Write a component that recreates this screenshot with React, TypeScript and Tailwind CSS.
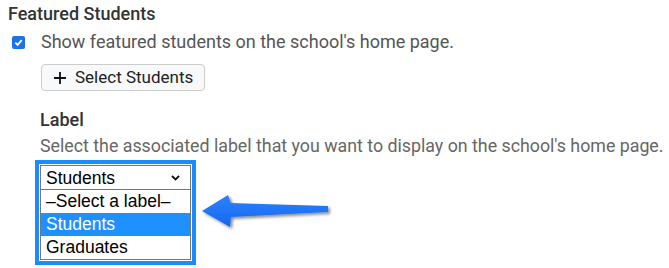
import React from 'react';

const options = ['–Select a label–', 'Students', 'Graduates'];

const Arrow: React.FC = () => (
  <svg width="132" height="42" viewBox="0 0 132 42" className="block">
    <defs>
      <filter id="arrowShadow" x="-10%" y="-30%" width="130%" height="180%">
        <feDropShadow dx="2" dy="2" stdDeviation="1.4" floodColor="#000" floodOpacity="0.45" />
      </filter>
      <linearGradient id="arrowFill" x1="0" y1="0" x2="0" y2="1">
        <stop offset="0" stopColor="#2c82ff" />
        <stop offset="1" stopColor="#1667ee" />
      </linearGradient>
    </defs>
    <polygon
      points="2,19 28,3 31,11 128,14 128,20 31,25 30,35"
      fill="url(#arrowFill)"
      filter="url(#arrowShadow)"
    />
  </svg>
);

export default function App() {
  return (
    <div className="w-[669px] h-[268px] bg-white overflow-hidden font-['Roboto',sans-serif] pl-[8px] pt-[2px]">
      <div className="text-[18px] leading-[24px] font-medium text-[#333]">Featured Students</div>

      <div className="flex items-center mt-[4px]">
        <div className="ml-[4px] w-[13px] h-[13px] rounded-[2px] bg-[#1a73e8] flex items-center justify-center">
          <svg width="9" height="9" viewBox="0 0 10 10">
            <path d="M1.5 5.2 L4 7.6 L8.6 2.4" fill="none" stroke="#fff" strokeWidth="2" />
          </svg>
        </div>
        <span className="ml-[16px] text-[18px] leading-[24px] text-[#555]">
          Show featured students on the school's home page.
        </span>
      </div>

      <div className="ml-[33px] mt-[10px] w-[164px] h-[27px] rounded-[4px] border border-[#ccc] bg-[#f8f9fa] flex items-center pl-[11px] text-[17px] text-[#222]">
        <svg width="14" height="14" viewBox="0 0 14 14">
          <path d="M7 1 V13 M1 7 H13" stroke="#111" strokeWidth="1.8" />
        </svg>
        <span className="ml-[8px]">Select Students</span>
      </div>

      <div className="ml-[32px] mt-[17px] text-[18px] leading-[24px] font-medium text-[#333]">Label</div>
      <div className="ml-[32px] mt-[2px] text-[17.8px] leading-[24px] text-[#666] whitespace-nowrap">
        Select the associated label that you want to display on the school's home page.
      </div>

      <div className="flex items-start mt-[2px]">
        <div className="ml-[27px] w-[161px] border-[4px] border-[#1a8cff] p-[1px] font-['Liberation_Sans',Arial,sans-serif] text-[17.5px] text-black">
          <div className="h-[25px] border border-[#767676] flex items-center justify-between pl-[5px] pr-[10px]">
            <span className="leading-[22px]">Students</span>
            <svg width="9" height="6" viewBox="0 0 9 6">
              <path d="M1 1 L4.5 4.5 L8 1" fill="none" stroke="#111" strokeWidth="1.8" />
            </svg>
          </div>
          <div className="border border-t-0 border-[#767676] flex flex-col">
            {options.map((o) => (
              <div
                key={o}
                className={`h-[23px] leading-[23px] pl-[5px] ${o === 'Students' ? 'bg-[#1e90ff] text-white' : ''}`}
              >
                {o}
              </div>
            ))}
          </div>
        </div>
        <div className="ml-[4px] mt-[32px]">
          <Arrow />
        </div>
      </div>
    </div>
  );
}
